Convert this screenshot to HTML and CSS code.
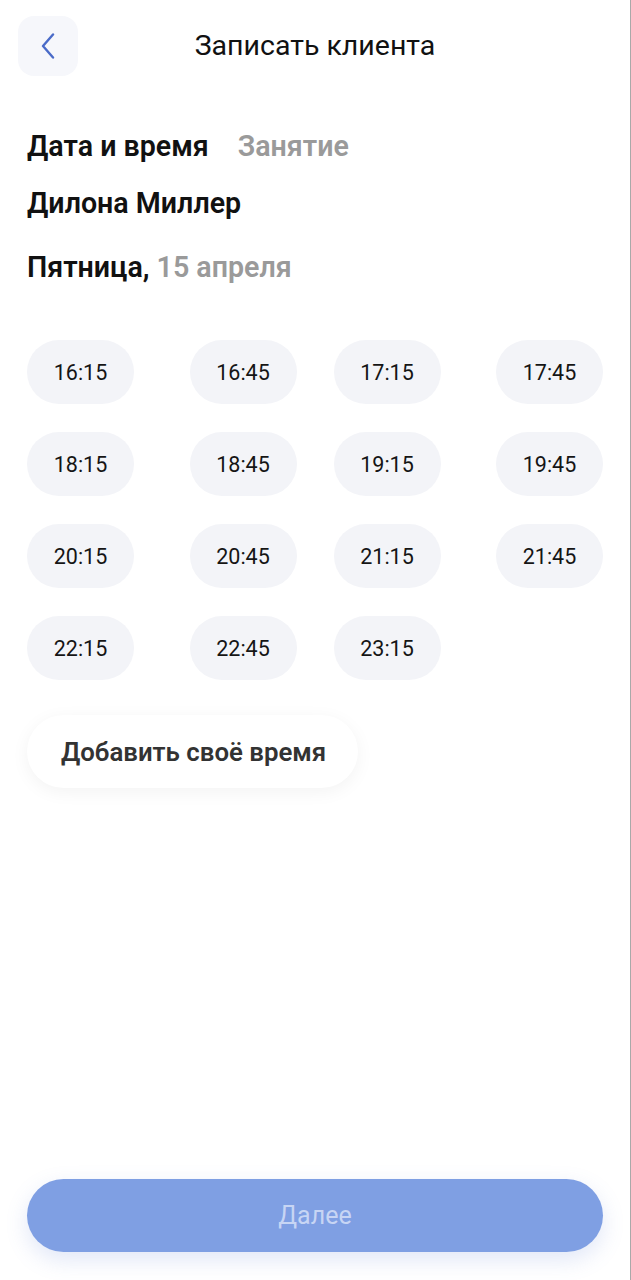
FILE: index.html
```html
<!DOCTYPE html>
<html lang="ru">
<head>
<meta charset="utf-8">
<title>Записать клиента</title>
<link rel="stylesheet" href="styles.css">
</head>
<body>
<div class="page">
  <header class="header">
    <button class="back" aria-label="Назад">
      <svg width="14" height="26" viewBox="0 0 14 26"><path d="M12 1.5 L2 13 L12 24.5" fill="none" stroke="#4a6bc8" stroke-width="2.4" stroke-linecap="round" stroke-linejoin="round"/></svg>
    </button>
    <h1 class="title">Записать клиента</h1>
    <span></span>
  </header>

  <nav class="tabs">
    <span class="tab active">Дата и время</span>
    <span class="tab">Занятие</span>
  </nav>

  <div class="client">Дилона Миллер</div>
  <div class="date">Пятница, <span class="muted">15 апреля</span></div>

  <div class="slots">
    <button class="slot">16:15</button>
    <button class="slot">16:45</button>
    <button class="slot">17:15</button>
    <button class="slot">17:45</button>
    <button class="slot">18:15</button>
    <button class="slot">18:45</button>
    <button class="slot">19:15</button>
    <button class="slot">19:45</button>
    <button class="slot">20:15</button>
    <button class="slot">20:45</button>
    <button class="slot">21:15</button>
    <button class="slot">21:45</button>
    <button class="slot">22:15</button>
    <button class="slot">22:45</button>
    <button class="slot">23:15</button>
  </div>

  <button class="add-time">Добавить своё время</button>

  <div class="footer">
    <button class="next">Далее</button>
  </div>
</div>
</body>
</html>
```

FILE: styles.css
```css
* { box-sizing: border-box; }
html, body { margin: 0; padding: 0; background: #fff; }
body { font-family: Roboto, "Noto Sans", Arial, sans-serif; color: #111; }

.page {
  width: 631px;
  min-height: 1280px;
  display: flex;
  flex-direction: column;
  border-right: 1px solid #a9a9a9;
}

.header {
  display: grid;
  grid-template-columns: 60px 1fr 60px;
  align-items: center;
  padding: 16px 18px 0 18px;
}
.back {
  width: 60px;
  height: 60px;
  border: none;
  border-radius: 16px;
  background: #f6f7fb;
  display: flex;
  align-items: center;
  justify-content: center;
  padding: 0;
}
.title {
  margin: 0;
  text-align: center;
  font-size: 28.5px;
  font-weight: 400;
  line-height: 32px;
  color: #111;
}

.tabs {
  display: flex;
  gap: 29px;
  margin: 54px 0 0 27px;
  font-size: 28.6px;
  line-height: 32px;
  font-weight: 600;
}
.tab { color: #9a9a9a; }
.tab.active { color: #111; }

.client {
  margin: 25px 0 0 27px;
  font-size: 28.6px;
  line-height: 32px;
  font-weight: 600;
}
.date {
  margin: 32px 0 0 27px;
  font-size: 28.6px;
  line-height: 32px;
  font-weight: 600;
}
.muted { color: #9a9a9a; }

.slots {
  display: grid;
  grid-template-columns: repeat(4, 1fr);
  row-gap: 28px;
  margin: 57px 27px 0 27px;
}
.slot {
  width: 107px;
  height: 64px;
  border: none;
  border-radius: 32px;
  background: #f3f4f8;
  font-family: Roboto, "Noto Sans", Arial, sans-serif;
  font-size: 21.5px;
  color: #151515;
  justify-self: center;
  padding: 0;
}
.slot:nth-child(4n+1) { justify-self: start; }
.slot:nth-child(4n) { justify-self: end; }

.add-time {
  align-self: flex-start;
  margin: 35px 0 0 27px;
  height: 73px;
  width: 331px;
  border: none;
  border-radius: 37px;
  background: #fff;
  box-shadow: 0 4px 18px rgba(0, 0, 0, 0.05);
  font-family: Roboto, "Noto Sans", Arial, sans-serif;
  font-size: 25.8px;
  font-weight: 600;
  color: #333;
  text-align: left;
  padding: 0 0 0 34px;
}

.footer {
  margin-top: auto;
  padding: 0 27px 28px 27px;
}
.next {
  width: 100%;
  height: 73px;
  border: none;
  border-radius: 37px;
  background: #7f9fe3;
  box-shadow: 0 8px 22px rgba(90, 120, 210, 0.18);
  font-family: Roboto, "Noto Sans", Arial, sans-serif;
  font-size: 25px;
  color: #c7d5f4;
}
```
